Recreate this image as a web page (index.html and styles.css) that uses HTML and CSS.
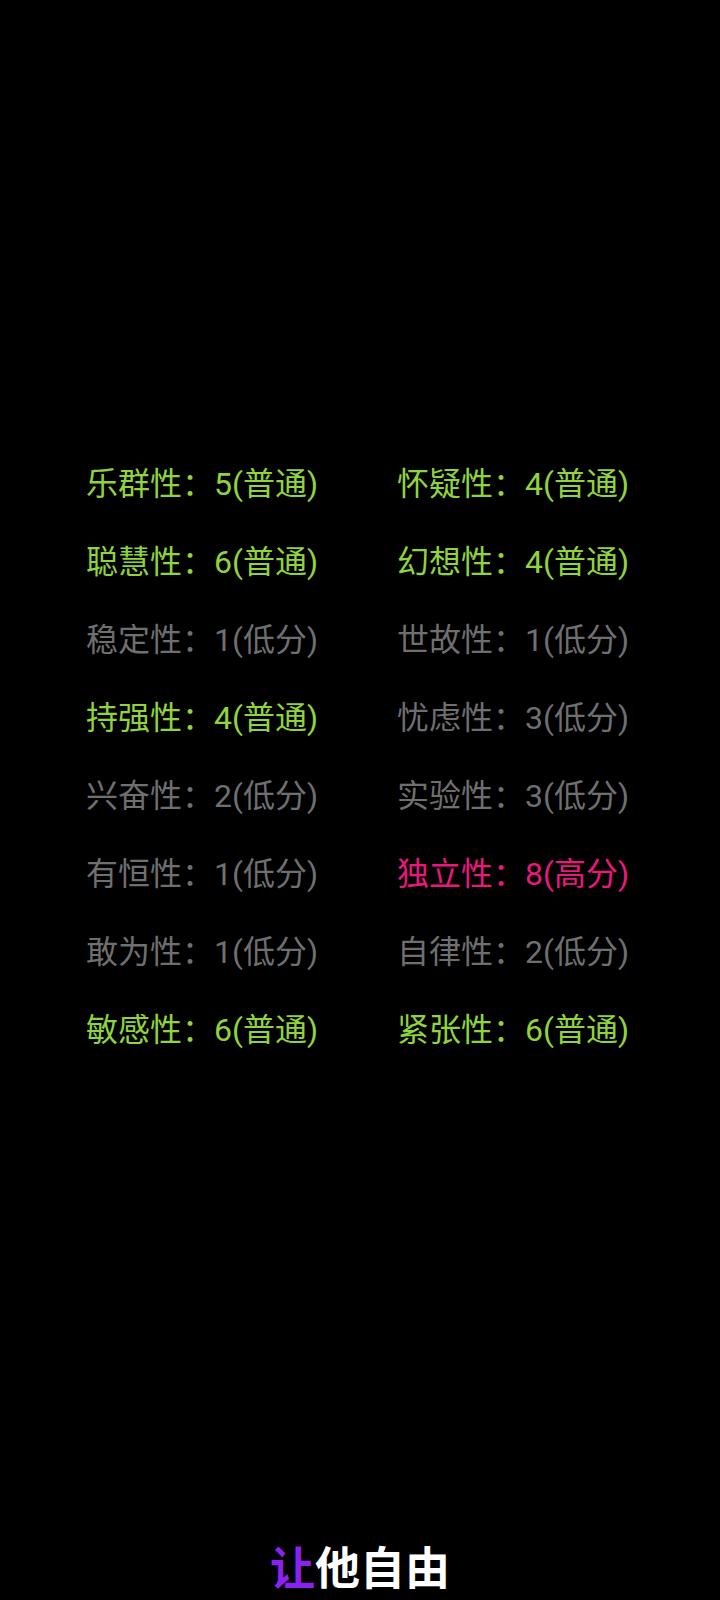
FILE: index.html
```html
<!DOCTYPE html>
<html lang="zh">
<head>
<meta charset="utf-8">
<link rel="stylesheet" href="styles.css">
</head>
<body>
<div class="page">
  <div class="grid">
    <div class="cell ok">乐群性：5(普通)</div>
    <div class="cell ok">怀疑性：4(普通)</div>
    <div class="cell ok">聪慧性：6(普通)</div>
    <div class="cell ok">幻想性：4(普通)</div>
    <div class="cell low">稳定性：1(低分)</div>
    <div class="cell low">世故性：1(低分)</div>
    <div class="cell ok">持强性：4(普通)</div>
    <div class="cell low">忧虑性：3(低分)</div>
    <div class="cell low">兴奋性：2(低分)</div>
    <div class="cell low">实验性：3(低分)</div>
    <div class="cell low">有恒性：1(低分)</div>
    <div class="cell high">独立性：8(高分)</div>
    <div class="cell low">敢为性：1(低分)</div>
    <div class="cell low">自律性：2(低分)</div>
    <div class="cell ok">敏感性：6(普通)</div>
    <div class="cell ok">紧张性：6(普通)</div>
  </div>
  <div class="caption"><span class="accent">让</span>他自由</div>
</div>
</body>
</html>
```

FILE: styles.css
```css
html, body {
  margin: 0;
  padding: 0;
  background: #000;
}
.page {
  width: 720px;
  height: 1600px;
  display: flex;
  flex-direction: column;
  overflow: hidden;
  font-family: Roboto, "Noto Sans CJK SC", sans-serif;
}
.grid {
  display: grid;
  grid-template-columns: 311px 240px;
  padding-left: 86px;
  padding-top: 445px;
}
.cell {
  font-size: 32px;
  line-height: 78px;
  height: 78px;
  white-space: nowrap;
}
.ok { color: #8fd43c; }
.low { color: #6f6f6f; }
.high { color: #e8197d; }
.caption {
  margin-top: auto;
  text-align: center;
  font-size: 45px;
  font-weight: bold;
  line-height: 56px;
  padding-bottom: 2px;
  color: #fff;
}
.accent { color: #8a22ee; }
```
